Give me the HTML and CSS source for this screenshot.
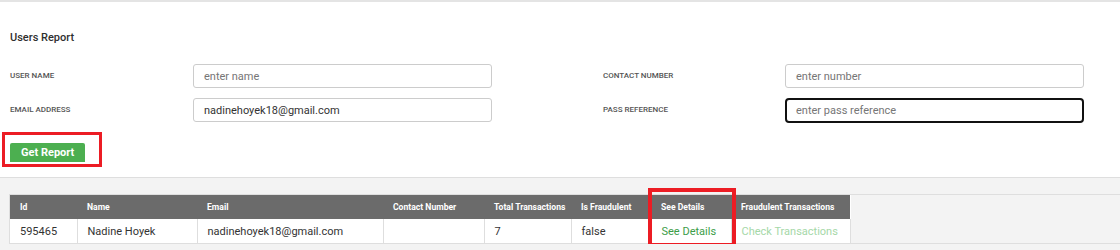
FILE: index.html
```html
<!DOCTYPE html>
<html lang="en">
<head>
  <meta charset="UTF-8" />
  <title>Users Report</title>
  <link rel="stylesheet" href="styles.css">
</head>
<body>
  <div class="top-bar"></div>

  <section class="report-form">
    <h3 class="title">Users Report</h3>

    <div class="fields">
      <label class="field-label" for="userName">User Name</label>
      <input type="text" id="userName" class="field-input" placeholder="enter name" />
      <span></span>
      <label class="field-label" for="contactNumber">Contact Number</label>
      <input type="text" id="contactNumber" class="field-input" placeholder="enter number" />

      <label class="field-label" for="email">Email Address</label>
      <input type="text" id="email" class="field-input" value="nadinehoyek18@gmail.com" />
      <span></span>
      <label class="field-label" for="passRef">Pass Reference</label>
      <input type="text" id="passRef" class="field-input focused" placeholder="enter pass reference" />
    </div>

    <div class="highlight highlight-btn">
      <button class="btn-report">Get Report</button>
    </div>
  </section>

  <section class="results">
    <div class="table-wrap">
      <table class="users-table">
        <colgroup>
          <col style="width:67px">
          <col style="width:120px">
          <col style="width:186px">
          <col style="width:101px">
          <col style="width:87px">
          <col style="width:80px">
          <col style="width:80px">
          <col style="width:119px">
        </colgroup>
        <thead>
          <tr>
            <th>Id</th>
            <th>Name</th>
            <th>Email</th>
            <th>Contact Number</th>
            <th>Total Transactions</th>
            <th>Is Fraudulent</th>
            <th>See Details</th>
            <th>Fraudulent Transactions</th>
          </tr>
        </thead>
        <tbody>
          <tr>
            <td>595465</td>
            <td>Nadine Hoyek</td>
            <td>nadinehoyek18@gmail.com</td>
            <td></td>
            <td>7</td>
            <td>false</td>
            <td><a href="#" class="link-details">See Details</a></td>
            <td><a href="#" class="link-check">Check Transactions</a></td>
          </tr>
        </tbody>
      </table>
      <div class="highlight highlight-col"></div>
    </div>
  </section>
</body>
</html>
```

FILE: styles.css
```css
:root {
  --green: #4caf50;
  --header-gray: #6b6b6b;
  --border: #dedede;
  --text: #333;
  --mark: #ec1c24;
}

* {
  box-sizing: border-box;
}

body {
  margin: 0;
  font-family: Roboto, "Liberation Sans", sans-serif;
  color: var(--text);
  background: #f3f3f3;
}

.top-bar {
  height: 2px;
  background: #e4e4e4;
}

.report-form {
  background: #fff;
  padding: 29px 0 10px 0;
  border-bottom: 1px solid var(--border);
}

.title {
  margin: 0 0 20px 10px;
  font-size: 11px;
  font-weight: 500;
  line-height: 13px;
  color: #2f2f2f;
}

.fields {
  display: grid;
  grid-template-columns: 183px 299px 111px 182px 299px;
  grid-auto-rows: 24px;
  row-gap: 10px;
  align-items: center;
  padding-left: 10px;
}

.field-label {
  margin-top: -2px;
  font-size: 8px;
  font-weight: 500;
  text-transform: uppercase;
  color: #555;
}

.field-input {
  height: 24px;
  width: 100%;
  padding: 0 10px;
  border: 1px solid #ccc;
  border-radius: 3px;
  font-family: inherit;
  font-size: 11px;
  color: var(--text);
  outline: none;
}

.field-input::placeholder {
  color: #767676;
}

.field-input.focused {
  height: 25px;
  border: 2px solid #111;
  border-radius: 4px;
  padding: 0 9px;
}

.highlight {
  border: 3px solid var(--mark);
}

.highlight-btn {
  display: inline-block;
  margin: 10px 0 0 2px;
  padding: 8px 14px 2px 5px;
}

.btn-report {
  display: block;
  height: 19px;
  padding: 0 11px;
  border: none;
  border-radius: 2px 2px 0 0;
  background: var(--green);
  color: #fff;
  font-family: inherit;
  font-size: 11px;
  font-weight: 700;
  cursor: pointer;
}

.results {
  padding: 16px 0 0 9px;
}

.table-wrap {
  position: relative;
  border: 1px solid var(--border);
  border-right: none;
}

.users-table {
  border-collapse: collapse;
  table-layout: fixed;
  width: 840px;
  background: #fff;
}

.users-table th {
  height: 24px;
  padding: 0 10px;
  background: var(--header-gray);
  color: #fff;
  font-size: 8.6px;
  font-weight: 700;
  text-align: left;
  white-space: nowrap;
}

.users-table td {
  height: 24px;
  padding: 0 10px;
  font-size: 11px;
  border-left: 1px solid var(--border);
  white-space: nowrap;
}

.users-table td:first-child {
  border-left: none;
}

.users-table td:last-child {
  border-right: 1px solid var(--border);
}

.users-table a {
  text-decoration: none;
}

.link-details {
  color: #3c9d48;
}

.link-check {
  color: #a5d8a8;
}

.highlight-col {
  position: absolute;
  left: 638px;
  top: -7px;
  width: 88px;
  height: 59px;
  border-width: 4px;
  pointer-events: none;
}
```
